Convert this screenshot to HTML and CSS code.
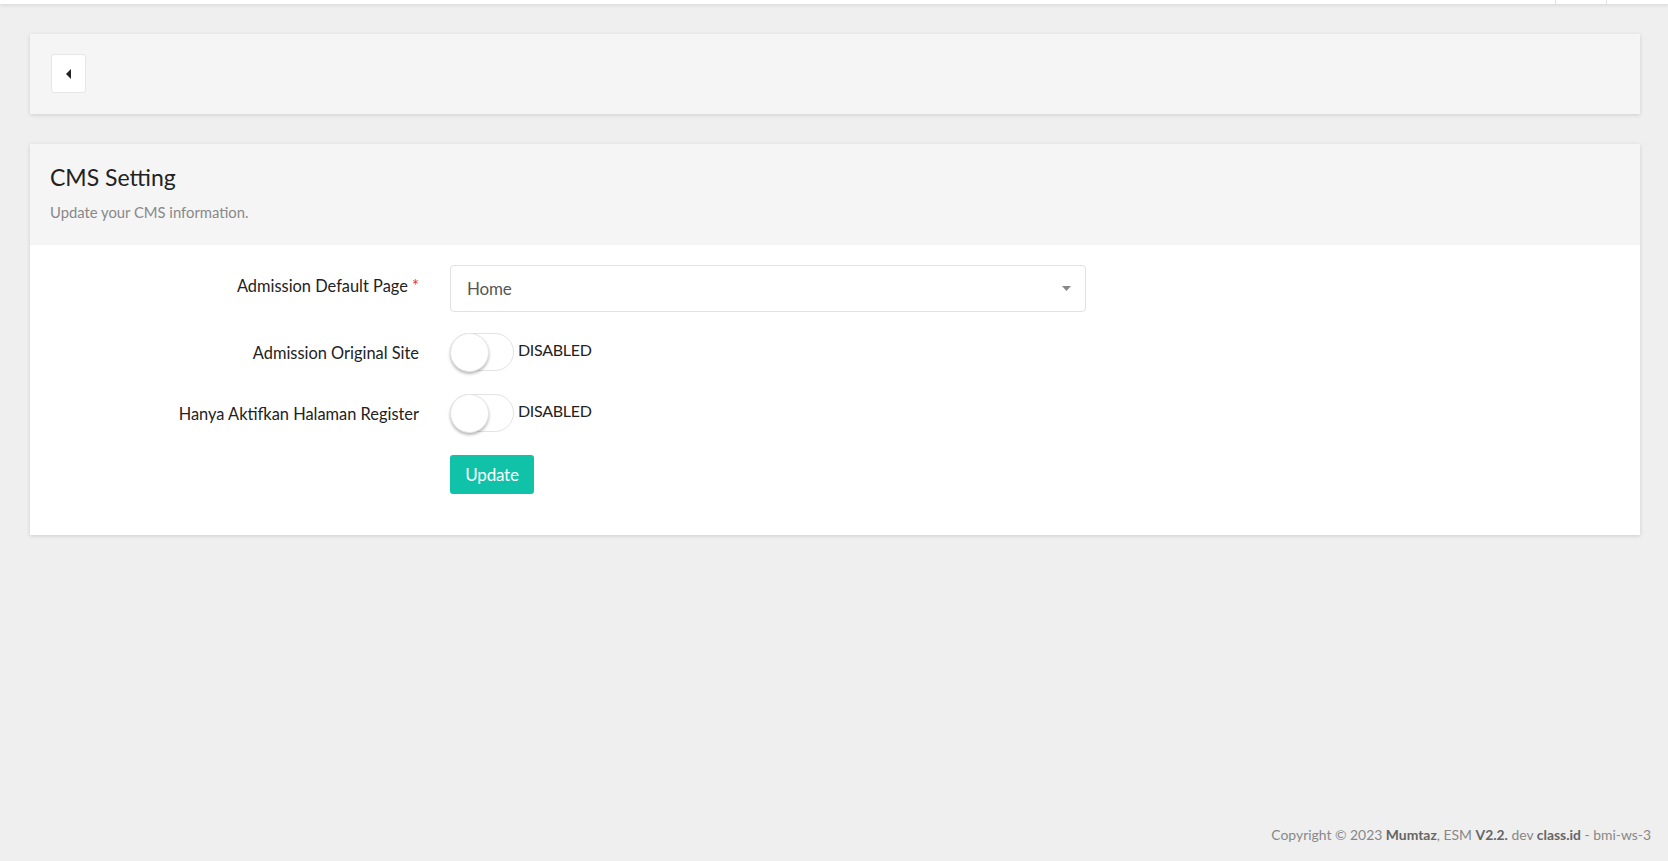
FILE: index.html
```html
<!DOCTYPE html>
<html lang="en">
<head>
<meta charset="utf-8">
<title>CMS Setting</title>
<link rel="stylesheet" href="styles.css">
</head>
<body>
<header class="topbar">
  <span class="topbar-sep"></span>
  <span class="topbar-sep last"></span>
</header>
<main class="content">
  <section class="card toolbar">
    <button class="back-btn" type="button" aria-label="Back">
      <svg width="6" height="10" viewBox="0 0 6 10"><path d="M5 0 L0 5 L5 10 Z" fill="#222"/></svg>
    </button>
  </section>

  <section class="card panel">
    <div class="panel-head">
      <h1 class="panel-title">CMS Setting</h1>
      <p class="panel-sub">Update your CMS information.</p>
    </div>
    <form class="panel-body">
      <div class="form-row row-select">
        <label class="form-label">Admission Default Page <span class="req">*</span></label>
        <div class="form-control select">
          <span class="select-value">Home</span>
          <svg class="select-caret" width="9" height="5" viewBox="0 0 9 5"><path d="M0 0 H9 L4.5 5 Z" fill="#888"/></svg>
        </div>
      </div>
      <div class="form-row row-toggle">
        <label class="form-label">Admission Original Site</label>
        <div class="toggle-wrap">
          <span class="toggle"><span class="knob"></span></span>
          <span class="toggle-text">DISABLED</span>
        </div>
      </div>
      <div class="form-row row-toggle">
        <label class="form-label">Hanya Aktifkan Halaman Register</label>
        <div class="toggle-wrap">
          <span class="toggle"><span class="knob"></span></span>
          <span class="toggle-text">DISABLED</span>
        </div>
      </div>
      <div class="form-row row-submit">
        <span class="form-label"></span>
        <button class="btn-update" type="button">Update</button>
      </div>
    </form>
  </section>
</main>
<footer class="footer">
  Copyright © 2023 <b>Mumtaz</b>, ESM <b>V2.2.</b> dev <b>class.id</b> - bmi-ws-3
</footer>
</body>
</html>
```

FILE: styles.css
```css
* { box-sizing: border-box; }
html, body { height: 100%; }
body {
  margin: 0;
  background: #efefef;
  font-family: "Lato", "Open Sans", sans-serif;
  color: #333;
  display: flex;
  flex-direction: column;
}
.topbar {
  height: 4px;
  background: #fff;
  box-shadow: 0 1px 4px rgba(0,0,0,0.12);
  display: flex;
  justify-content: flex-end;
  position: relative;
  z-index: 2;
}
.topbar-sep {
  width: 1px;
  height: 4px;
  background: #e2e2e2;
  margin-right: 50px;
}
.topbar-sep.last { margin-right: 61px; }

.content {
  padding: 30px 28px 0 30px;
  flex: 1;
}
.card {
  box-shadow: 0 1px 4px rgba(0,0,0,0.14);
}
.toolbar {
  background: #f5f5f5;
  padding: 20px;
  height: 80px;
}
.back-btn {
  width: 35px;
  height: 39px;
  background: #fff;
  border: 1px solid #e6e6e6;
  border-radius: 3px;
  display: flex;
  align-items: center;
  justify-content: center;
  padding: 0;
  margin-left: 1px;
}
.panel {
  margin-top: 30px;
  background: #fff;
}
.panel-head {
  background: #f5f5f5;
  padding: 19px 20px 0 20px;
  height: 101px;
}
.panel-title {
  margin: 0;
  font-size: 23px;
  font-weight: 400;
  line-height: 28px;
  color: #222;
}
.panel-sub {
  margin: 11px 0 0;
  font-size: 14.8px;
  line-height: 20px;
  color: #888;
}
.panel-body {
  padding: 20px 0 41px;
  margin: 0;
}
.form-row {
  display: flex;
  align-items: flex-start;
}
.form-label {
  width: 389px;
  flex: none;
  text-align: right;
  font-size: 16.4px;
  line-height: 22px;
  color: #222;
  margin-right: 31px;
}
.req { color: #e8343f; }
.row-select { height: 47px; margin-bottom: 21px; }
.row-select .form-label { padding-top: 10px; }
.row-toggle { height: 38px; margin-bottom: 23px; }
.row-toggle .form-label { padding-top: 9px; }
.select {
  width: 636px;
  height: 47px;
  border: 1px solid #e2e2e2;
  border-radius: 4px;
  display: flex;
  align-items: center;
  justify-content: space-between;
  padding: 0 14px 0 16px;
  background: #fff;
}
.select-value {
  font-size: 17px;
  color: #555;
  letter-spacing: -0.2px;
}
.toggle-wrap {
  display: flex;
  align-items: flex-start;
}
.toggle {
  width: 64px;
  height: 38px;
  border: 1px solid #e3e3e3;
  border-radius: 19px;
  background: #fff;
  position: relative;
  flex: none;
}
.knob {
  position: absolute;
  left: -1px;
  top: -1px;
  width: 39px;
  height: 39px;
  border-radius: 50%;
  background: #fff;
  border: 1px solid #e6e6e6;
  box-shadow: 0 2px 3px rgba(0,0,0,0.28);
}
.toggle-text {
  margin-left: 4px;
  font-size: 16px;
  line-height: 22px;
  padding-top: 6px;
  color: #222;
  letter-spacing: -0.3px;
}
.btn-update {
  width: 84px;
  height: 39px;
  background: #10c2a8;
  border: none;
  border-radius: 3px;
  color: #fff;
  font-family: inherit;
  font-size: 17px;
  letter-spacing: -0.2px;
  padding: 0;
}
.footer {
  text-align: right;
  padding: 0 17px 18px 0;
  font-size: 13.9px;
  color: #888;
}
.footer b { color: #666; }
```
